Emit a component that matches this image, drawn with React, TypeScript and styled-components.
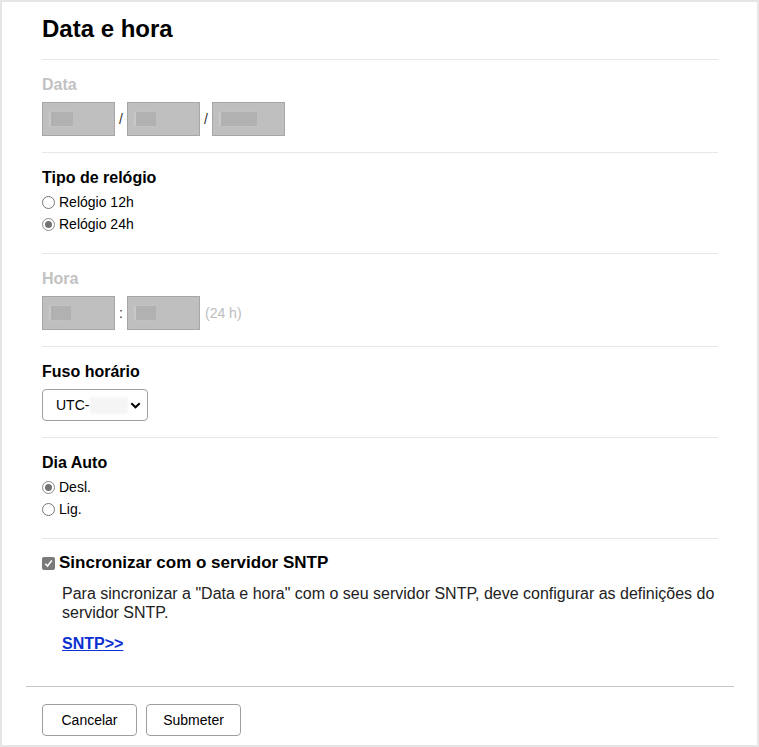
import * as React from 'react';
import styled, { createGlobalStyle } from 'styled-components';

const GlobalStyle = createGlobalStyle`
  html, body {
    margin: 0;
    padding: 0;
    background: #e6e6e6;
    font-family: "Liberation Sans", Arial, sans-serif;
    color: #000;
  }
  * {
    box-sizing: border-box;
  }
`;

const Page = styled.div`
  padding: 2px;
`;

const Panel = styled.div`
  background: #fff;
  min-height: 743px;
  padding-top: 13px;
`;

const Content = styled.div`
  padding: 0 39px 0 40px;
`;

const Title = styled.h1`
  margin: 0;
  font-size: 24px;
  line-height: 28px;
  font-weight: bold;
  padding-bottom: 16px;
  border-bottom: 1px solid #e8e8e8;
`;

const Section = styled.div<{ $last?: boolean }>`
  padding: ${(p) => (p.$last ? '14px 0 32px' : '15px 0 16px')};
  border-bottom: ${(p) => (p.$last ? 'none' : '1px solid #e8e8e8')};
`;

const Label = styled.div<{ $disabled?: boolean }>`
  font-size: 16px;
  line-height: 20px;
  font-weight: bold;
  color: ${(p) => (p.$disabled ? '#c2c2c2' : '#000')};
`;

const FieldRow = styled.div`
  display: flex;
  align-items: center;
  margin-top: 7px;
`;

const FakeInput = styled.div<{ $blob: number }>`
  width: 73px;
  height: 34px;
  background: #bfbfbf;
  border: 1px solid #a6a6a6;
  display: flex;
  align-items: center;
  padding-left: 8px;
  &::before {
    content: '';
    display: block;
    width: ${(p) => p.$blob}px;
    height: 14px;
    background: #b1b1b1;
    box-shadow: -2px 0 2px #cacaca;
    filter: blur(0.6px);
  }
`;

const Sep = styled.span`
  font-size: 14px;
  color: #333;
  width: 12px;
  text-align: center;
`;

const Hint = styled.span`
  font-size: 14px;
  color: #bdbdbd;
  margin-left: 5px;
`;

const RadioList = styled.div`
  margin: 3px 0 2px;
`;

const OptionRow = styled.label`
  display: flex;
  align-items: center;
  height: 22px;
  font-size: 14px;
  color: #000;
  gap: 4px;
`;

const RadioDot = styled.span<{ $checked?: boolean }>`
  width: 13px;
  height: 13px;
  border-radius: 50%;
  border: 1px solid ${(p) => (p.$checked ? '#8a8a8a' : '#767676')};
  background: #fff;
  display: inline-flex;
  align-items: center;
  justify-content: center;
  &::after {
    content: '';
    width: 7px;
    height: 7px;
    border-radius: 50%;
    background: ${(p) => (p.$checked ? '#737373' : 'transparent')};
  }
`;

const SelectBox = styled.div`
  width: 106px;
  height: 32px;
  border: 1px solid #a0a0a0;
  border-radius: 4px;
  display: flex;
  align-items: center;
  padding: 0 6px 0 13px;
  font-size: 14px;
  color: #000;
`;

const Blurred = styled.span`
  width: 38px;
  height: 17px;
  margin-left: 1px;
  background: #f5f5f5;
  filter: blur(0.8px);
`;

const Chevron = styled.svg`
  margin-left: auto;
`;

const CheckRow = styled.div`
  display: flex;
  align-items: center;
  height: 20px;
  gap: 4px;
`;

const CheckBox = styled.span`
  width: 13px;
  height: 13px;
  border-radius: 2px;
  background: #7a7a7a;
  display: inline-flex;
  align-items: center;
  justify-content: center;
`;

const CheckText = styled.span`
  font-size: 17px;
  font-weight: bold;
`;

const Indented = styled.div`
  padding-left: 20px;
`;

const Paragraph = styled.p`
  margin: 11px 0 0;
  font-size: 16px;
  line-height: 19px;
  color: #222;
`;

const LinkText = styled.a`
  display: block;
  margin-top: 12px;
  font-size: 16px;
  line-height: 20px;
  font-weight: bold;
  color: #0b2fd0;
  text-decoration: underline;
`;

const Footer = styled.div`
  margin: 0 23px 0 24px;
  border-top: 1px solid #c6c6c6;
  padding: 17px 0 0 16px;
  display: flex;
  gap: 9px;
`;

const Button = styled.button`
  width: 95px;
  height: 32px;
  background: #fff;
  border: 1px solid #9e9e9e;
  border-radius: 4px;
  font-family: "Liberation Sans", Arial, sans-serif;
  font-size: 14px;
  color: #000;
  padding: 0;
`;

export default function App() {
  return (
    <>
      <GlobalStyle />
      <Page>
        <Panel>
          <Content>
            <Title>Data e hora</Title>

            <Section>
              <Label $disabled>Data</Label>
              <FieldRow>
                <FakeInput $blob={22} />
                <Sep>/</Sep>
                <FakeInput $blob={20} />
                <Sep>/</Sep>
                <FakeInput $blob={36} />
              </FieldRow>
            </Section>

            <Section>
              <Label>Tipo de relógio</Label>
              <RadioList>
                <OptionRow>
                  <RadioDot />
                  Relógio 12h
                </OptionRow>
                <OptionRow>
                  <RadioDot $checked />
                  Relógio 24h
                </OptionRow>
              </RadioList>
            </Section>

            <Section>
              <Label $disabled>Hora</Label>
              <FieldRow>
                <FakeInput $blob={20} />
                <Sep>:</Sep>
                <FakeInput $blob={20} />
                <Hint>(24 h)</Hint>
              </FieldRow>
            </Section>

            <Section>
              <Label>Fuso horário</Label>
              <FieldRow>
                <SelectBox>
                  UTC-
                  <Blurred />
                  <Chevron width="11" height="7" viewBox="0 0 11 7">
                    <path d="M1.3 1.3 L5.5 5.3 L9.7 1.3" fill="none" stroke="#000" strokeWidth="2" />
                  </Chevron>
                </SelectBox>
              </FieldRow>
            </Section>

            <Section>
              <Label>Dia Auto</Label>
              <RadioList>
                <OptionRow>
                  <RadioDot $checked />
                  Desl.
                </OptionRow>
                <OptionRow>
                  <RadioDot />
                  Lig.
                </OptionRow>
              </RadioList>
            </Section>

            <Section $last>
              <CheckRow>
                <CheckBox>
                  <svg width="9" height="9" viewBox="0 0 9 9">
                    <path d="M1.3 4.8 L3.5 7 L7.8 1.6" fill="none" stroke="#fff" strokeWidth="1.6" />
                  </svg>
                </CheckBox>
                <CheckText>Sincronizar com o servidor SNTP</CheckText>
              </CheckRow>
              <Indented>
                <Paragraph>
                  Para sincronizar a "Data e hora" com o seu servidor SNTP, deve configurar as definições do servidor SNTP.
                </Paragraph>
                <LinkText href="#">SNTP&gt;&gt;</LinkText>
              </Indented>
            </Section>
          </Content>
          <Footer>
            <Button>Cancelar</Button>
            <Button>Submeter</Button>
          </Footer>
        </Panel>
      </Page>
    </>
  );
}
